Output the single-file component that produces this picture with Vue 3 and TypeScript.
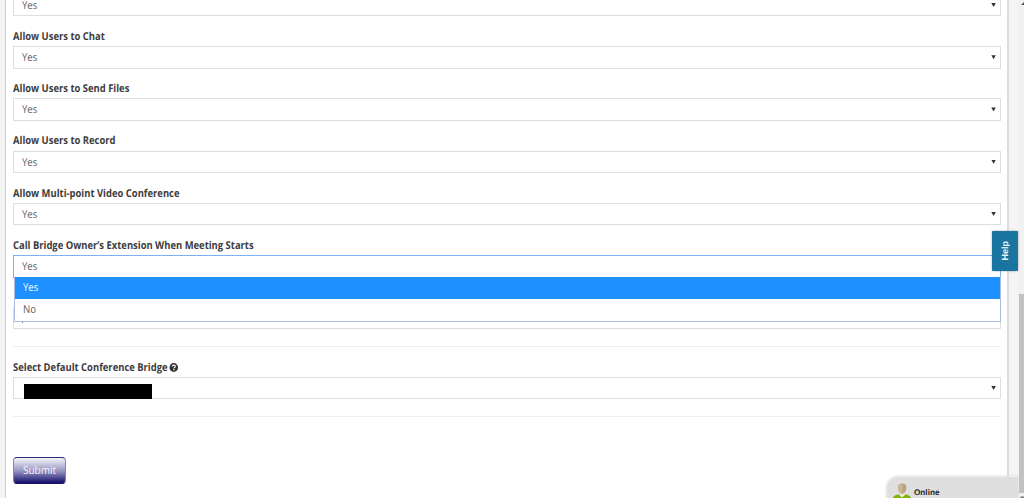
<script setup lang="ts">
interface Field {
  label: string
  value: string
}

const fields: Field[] = [
  { label: 'Allow Users to Chat', value: 'Yes' },
  { label: 'Allow Users to Send Files', value: 'Yes' },
  { label: 'Allow Users to Record', value: 'Yes' },
  { label: 'Allow Multi-point Video Conference', value: 'Yes' },
]
const options: string[] = ['Yes', 'No']
const highlighted = 'Yes'
</script>

<template>
  <div class="page">
    <main class="panel">
      <div class="select first"><span class="value">Yes</span><i class="arrow"></i></div>

      <div v-for="field in fields" :key="field.label" class="field">
        <label class="label">{{ field.label }}</label>
        <div class="select"><span class="value">{{ field.value }}</span><i class="arrow"></i></div>
      </div>

      <div class="field">
        <label class="label">Call Bridge Owner’s Extension When Meeting Starts</label>
        <div class="select open">
          <span class="value">Yes</span>
          <ul class="menu">
            <li v-for="o in options" :key="o" class="option" :class="{ active: o === highlighted }">
              <span class="value">{{ o }}</span>
            </li>
          </ul>
        </div>
      </div>

      <div class="covered"><i class="speck"></i></div>
      <hr class="rule" />

      <div class="bridge">
        <label class="label">
          Select Default Conference Bridge
          <svg class="help-icon" viewBox="0 0 18 18" preserveAspectRatio="none">
            <circle cx="9" cy="9" r="8.8" fill="#333" />
            <path d="M5.9 6.8C6.2 4.9 7.4 4.1 9.1 4.1c1.8 0 3.2 1 3.2 2.7 0 2.2-2.9 2.1-2.9 4.1" fill="none" stroke="#fff" stroke-width="2.3" />
            <rect x="8.1" y="12.3" width="2.5" height="2.4" fill="#fff" />
          </svg>
        </label>
        <div class="select"><span class="redacted"></span><i class="arrow"></i></div>
      </div>
      <hr class="rule last" />

      <button class="submit" type="button"><span>Submit</span></button>
    </main>

    <div class="scrollbar">
      <svg class="up" viewBox="0 0 6 4"><path d="M1 4L5 0L6 1V4Z" fill="#505050" /></svg>
      <div class="thumb"></div>
      <svg class="down" viewBox="0 0 6 2"><path d="M2 0.5H6V2H3Z" fill="#777" /></svg>
    </div>

    <div class="help-tab"><span>Help</span></div>

    <div class="chat">
      <svg class="avatar" viewBox="0 0 18 16">
        <path d="M0 16C0 13 2 12 6 11.3L9 14L12 11.3C16 12 18 13 18 16Z" fill="#7fb30b" />
        <path d="M6.3 9.5H12L12 12L9 14.5L6.3 12Z" fill="#eee8dd" />
        <path d="M5 3.5C5 1.3 6.7 .4 9.2 .4S13.4 1.5 13.4 3.8C13.4 7.5 12 10.8 9.2 10.8S5 7.5 5 3.5Z" fill="#b9a483" />
        <path d="M5 4C5.3 1.6 6.7 .4 9.2 .4V10.8C6.6 10.8 5 7.5 5 4Z" fill="#c8b798" />
      </svg>
      <span>Online</span>
    </div>
  </div>
</template>

<style>
html,
body {
  margin: 0;
  overflow: hidden;
}
</style>

<style scoped>
.page {
  position: relative;
  display: flex;
  width: 1024px;
  height: 498px;
  overflow: hidden;
  background: #f4f4f4;
  font-family: 'Open Sans', 'Noto Sans', sans-serif;
  font-size: 10.8px;
  text-rendering: geometricPrecision;
  color: #5c5c5c;
}
.panel {
  box-sizing: border-box;
  width: 1004px;
  height: 498px;
  margin-left: 5px;
  padding: 0 6px 0 7.3px;
  border-left: 1px solid #d0d0d0;
  border-right: 2px solid #dcdcdc;
  background: #fff;
}
.select {
  position: relative;
  box-sizing: border-box;
  width: 987.5px;
  height: 22.4px;
  padding-left: 7.8px;
  border: 1px solid #dedede;
  background: #fff;
  line-height: 22px;
}
.value {
  display: block;
  width: max-content;
  transform: scaleX(0.89);
  transform-origin: left;
}
.first {
  margin-top: -6px;
}
.label {
  display: flex;
  align-items: center;
  box-sizing: border-box;
  width: max-content;
  height: 29.85px;
  padding-top: 10.4px;
  color: #3c3c3c;
  font-weight: 700;
  transform: scaleX(0.873);
  transform-origin: left;
}
.arrow {
  position: absolute;
  right: 4px;
  top: 8px;
  width: 4.5px;
  height: 4px;
  background: #333;
  clip-path: polygon(0 0, 100% 0, 50% 100%);
}
.select.open {
  border-color: #7eb0f5;
}
.menu {
  position: absolute;
  z-index: 2;
  left: -0.3px;
  top: 21px;
  box-sizing: border-box;
  width: 987px;
  height: 45px;
  margin: 0;
  padding: 0;
  border: 1px solid #a9bfe2;
  border-top: 0;
  background: #fff;
  list-style: none;
}
.option {
  height: 22px;
  padding-left: 7.5px;
  line-height: 22.6px;
}
.active {
  background: #1e90ff;
  color: #fff;
}
.covered {
  display: flex;
  align-items: flex-end;
  box-sizing: border-box;
  width: 987.5px;
  height: 22px;
  margin-top: 29.7px;
  padding: 0 0 5.5px 8px;
  border: 1px solid #dedede;
}
.speck {
  width: 1px;
  height: 1px;
  background: #777;
}
.rule {
  width: 987px;
  height: 1px;
  margin: 17px 0 0;
  border: 0;
  background: #eee;
}
.bridge .label {
  height: 29.8px;
  padding-top: 10.5px;
}
.help-icon {
  width: 10.2px;
  height: 9px;
  margin-left: 2.2px;
}
.redacted {
  display: block;
  width: 128px;
  height: 15px;
  margin: 6px 0 0 1.5px;
  background: #000;
}
.last {
  margin-top: 16.8px;
}
.submit {
  display: block;
  box-sizing: border-box;
  width: 53px;
  height: 26.5px;
  margin-top: 40px;
  padding: 1px 0 0;
  border: 1px solid #15116d;
  border-color: #2c2a7c #8583ac #15116d;
  border-radius: 4px;
  background: linear-gradient(#f5f5fa 0%, #cfcde3 22%, #8f8dbe 55%, #120e6b 100%);
  color: #f5f5fb;
  font: inherit;
  text-rendering: inherit;
}
.submit span {
  display: block;
  transform: scaleX(0.93);
}
.scrollbar {
  position: relative;
  width: 6px;
  height: 498px;
  margin-left: auto;
  background: #f1f1f1;
}
.thumb {
  position: absolute;
  left: 1px;
  top: 294px;
  width: 5px;
  height: 199px;
  background: #c1c1c1;
}
.up {
  position: absolute;
  left: 2px;
  top: 1px;
  width: 6px;
  height: 4px;
}
.down {
  position: absolute;
  left: 0;
  bottom: 0;
  width: 6px;
  height: 2px;
}
.help-tab {
  position: absolute;
  z-index: 3;
  left: 992px;
  top: 231px;
  display: flex;
  align-items: center;
  justify-content: center;
  width: 26px;
  height: 39.5px;
  border-radius: 1px;
  background: #19759f;
  box-shadow: 0 0 2px #0006;
  color: #e6f2f7;
  font: 700 9px 'Liberation Sans', sans-serif;
}
.help-tab span {
  writing-mode: vertical-rl;
  transform: rotate(180deg);
}
.chat {
  position: absolute;
  z-index: 3;
  left: 886px;
  top: 476px;
  display: flex;
  box-sizing: border-box;
  width: 132px;
  height: 30px;
  padding: 6px 0 0 6px;
  border: 1px solid #eee;
  border-right: 0;
  border-bottom: 0;
  border-radius: 13px 0 0 0;
  background: #dfdfdf;
  box-shadow: 0 0 2px #ccc;
  color: #222;
  font: 700 8.2px/20px 'Liberation Sans', sans-serif;
}
.avatar {
  width: 18px;
  height: 16px;
  margin-right: 3px;
}
</style>
